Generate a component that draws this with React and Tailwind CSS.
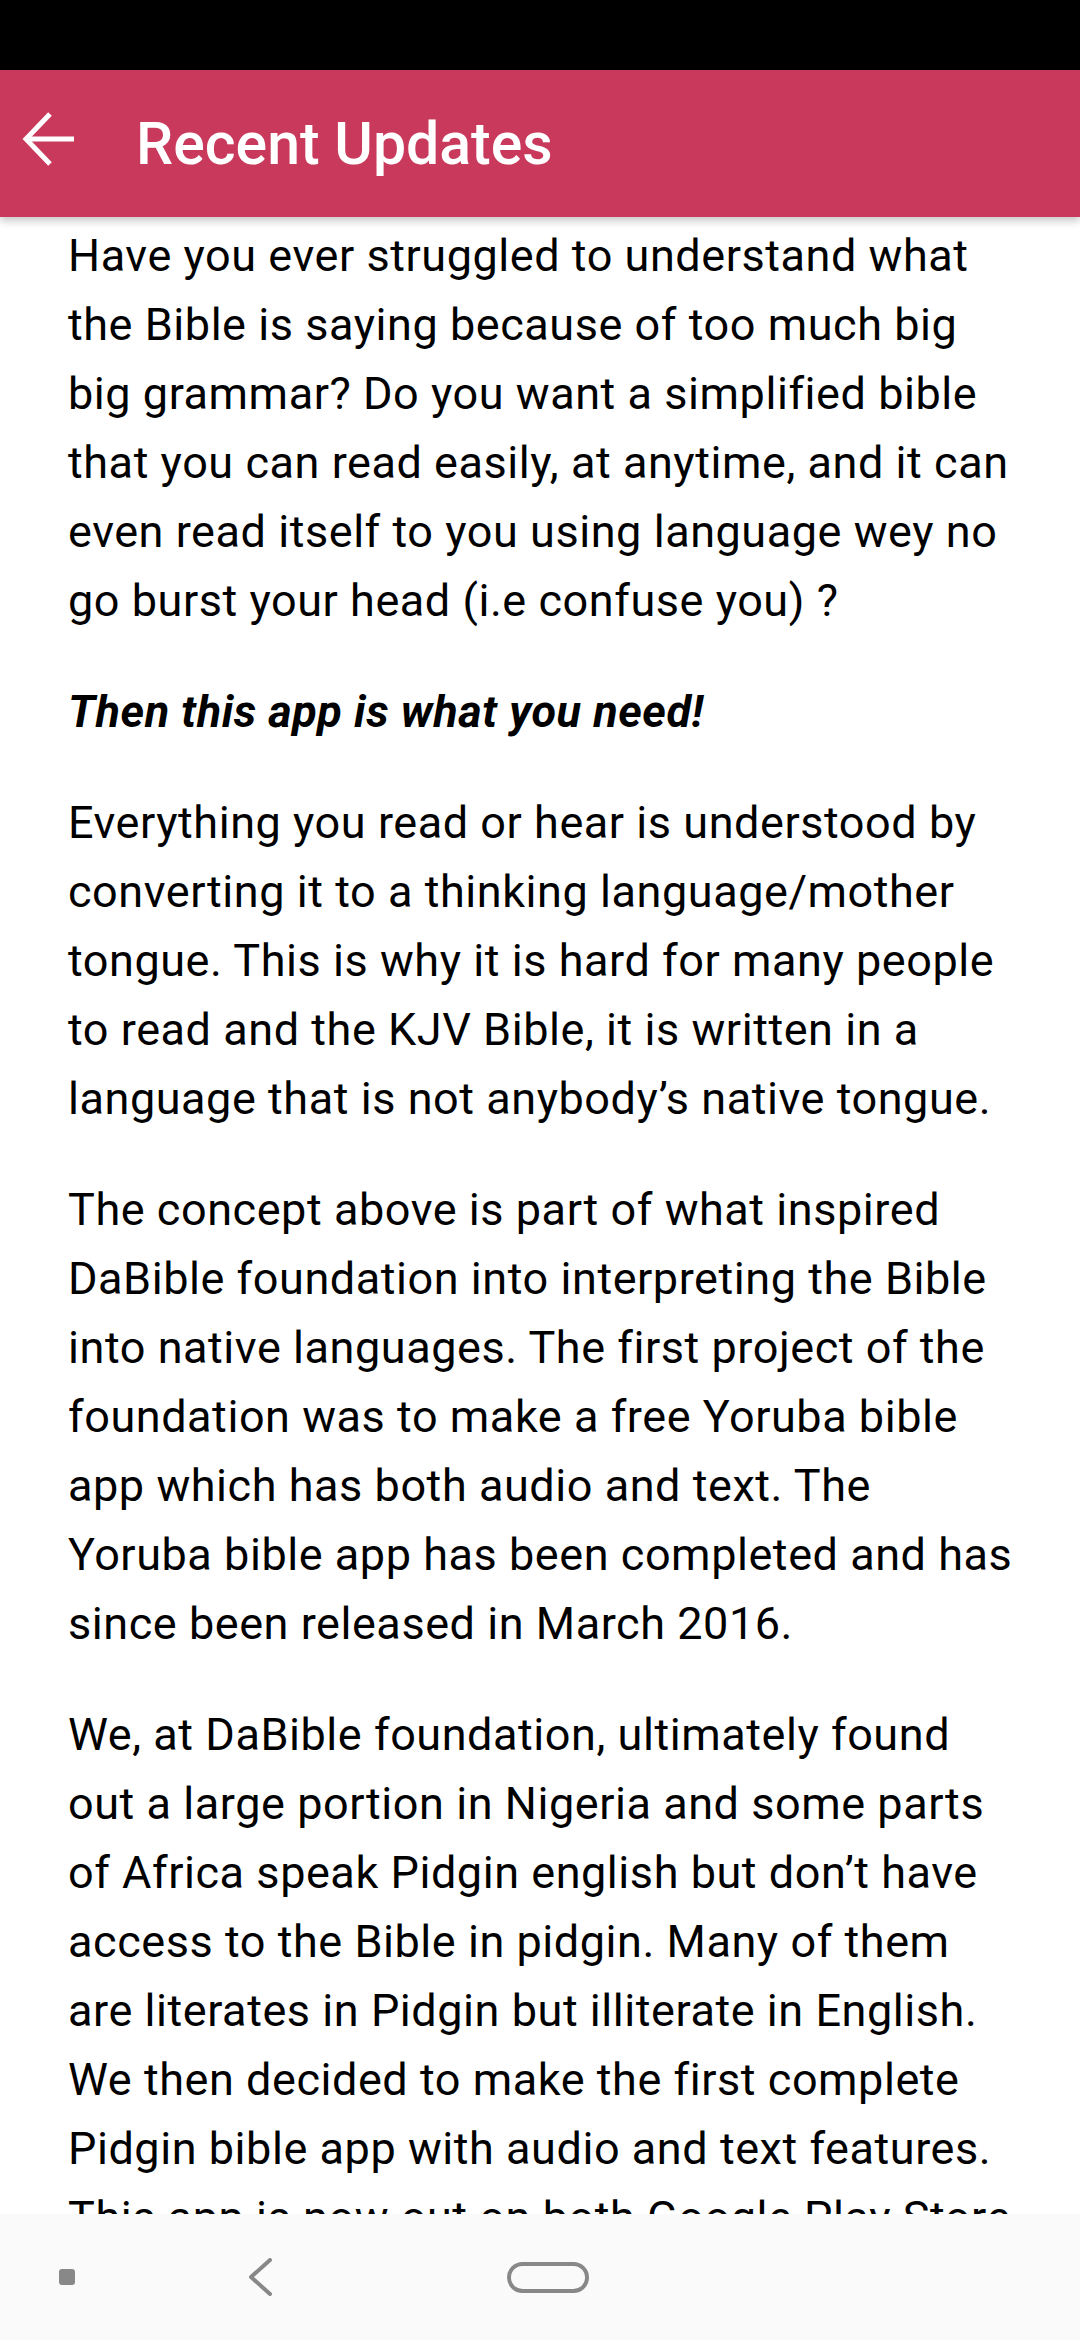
import React from 'react';

const paragraphs = [
  {
    lines: [
      'Have you ever struggled to understand what',
      'the Bible is saying because of too much big',
      'big grammar? Do you want a simplified bible',
      'that you can read easily, at anytime, and it can',
      'even read itself to you using language wey no',
      'go burst your head (i.e confuse you) ?',
    ],
  },
  { lines: ['Then this app is what you need!'], strong: true },
  {
    lines: [
      'Everything you read or hear is understood by',
      'converting it to a thinking language/mother',
      'tongue. This is why it is hard for many people',
      'to read and the KJV Bible, it is written in a',
      'language that is not anybody’s native tongue.',
    ],
  },
  {
    lines: [
      'The concept above is part of what inspired',
      'DaBible foundation into interpreting the Bible',
      'into native languages. The first project of the',
      'foundation was to make a free Yoruba bible',
      'app which has both audio and text. The',
      'Yoruba bible app has been completed and has',
      'since been released in March 2016.',
    ],
  },
  {
    lines: [
      'We, at DaBible foundation, ultimately found',
      'out a large portion in Nigeria and some parts',
      'of Africa speak Pidgin english but don’t have',
      'access to the Bible in pidgin. Many of them',
      'are literates in Pidgin but illiterate in English.',
      'We then decided to make the first complete',
      'Pidgin bible app with audio and text features.',
      'This app is now out on both Google Play Store',
      'and Apple App Store.',
    ],
  },
];

const BackArrow = () => (
  <svg width="80" height="60" viewBox="0 0 80 60" className="-mt-[10px] flex-shrink-0">
    <path d="M74 30H28" stroke="white" strokeWidth="5" fill="none" />
    <path d="M50 5L26 30L50 55" stroke="white" strokeWidth="5" fill="none" strokeLinejoin="miter" />
  </svg>
);

const NavBar = () => (
  <div className="h-[126px] bg-[#fafafa] flex items-center pl-[59px] flex-shrink-0">
    <div className="w-[16px] h-[16px] rounded-[3px] bg-[#888888]" />
    <svg width="26" height="38" viewBox="0 0 26 38" className="ml-[172px]">
      <path d="M23 2L4 19L23 36" stroke="#888888" strokeWidth="4" fill="none" strokeLinecap="round" strokeLinejoin="round" />
    </svg>
    <div className="ml-[234px] w-[82px] h-[31px] rounded-full border-[4px] border-[#888888]" />
  </div>
);

export default function App() {
  return (
    <div className="w-[1080px] h-[2340px] flex flex-col overflow-hidden bg-white font-['Roboto',sans-serif]">
      <div className="h-[70px] bg-black flex-shrink-0" />
      <div className="h-[147px] bg-[#c8395c] flex items-center relative z-10 shadow-[0_4px_8px_rgba(0,0,0,0.22)] flex-shrink-0">
        <BackArrow />
        <h1 className="ml-[56px] text-white text-[59px] font-medium leading-none">Recent Updates</h1>
      </div>
      <div className="flex-1 overflow-hidden px-[68px] pt-[4px] text-black text-[45px] tracking-[0.55px] leading-[69px]">
        {paragraphs.map((p, i) => (
          <p key={i} className={`mb-[42px] whitespace-nowrap ${p.strong ? 'font-bold italic' : ''}`}>
            {p.lines.map((line, j) => (
              <React.Fragment key={j}>
                {line}
                {j < p.lines.length - 1 && <br />}
              </React.Fragment>
            ))}
          </p>
        ))}
      </div>
      <NavBar />
    </div>
  );
}
